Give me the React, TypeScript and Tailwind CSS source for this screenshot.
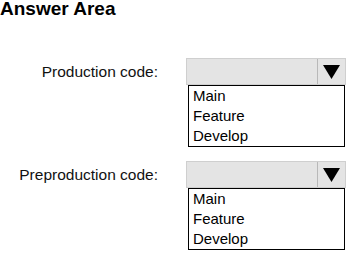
export default function App() {
  const rows = [
    { label: "Production code:", options: ["Main", "Feature", "Develop"] },
    { label: "Preproduction code:", options: ["Main", "Feature", "Develop"] },
  ];

  return (
    <div
      className="w-[347px] h-[254px] bg-white text-black overflow-hidden"
      style={{ fontFamily: '"Liberation Sans", Arial, sans-serif' }}
    >
      <h1 className="text-[19px] leading-[17px] font-bold">Answer Area</h1>

      <div className="mt-[41px] flex flex-col gap-[14px]">
        {rows.map((row) => (
          <div key={row.label} className="flex items-start">
            <div className="w-[158px] h-[27px] leading-[27px] text-right text-[15.5px] text-[#111]">
              {row.label}
            </div>
            <div className="ml-[28px] w-[160px] flex flex-col">
              {/* Dropdown header */}
              <div className="h-[27px] flex border border-[#cfcfcf] bg-[#e4e4e4]">
                <div className="flex-1" />
                <div className="w-[28px] border-l border-[#b8b8b8] flex items-center justify-center">
                  <svg width="17" height="14" viewBox="0 0 17 14">
                    <polygon points="0,0 17,0 8.5,14" fill="#000" />
                  </svg>
                </div>
              </div>
              {/* Options list */}
              <div className="ml-[2px] mr-[1px] border border-black pl-[4px]">
                {row.options.map((opt) => (
                  <div key={opt} className="text-[15px] leading-[20px]">
                    {opt}
                  </div>
                ))}
              </div>
            </div>
          </div>
        ))}
      </div>
    </div>
  );
}
